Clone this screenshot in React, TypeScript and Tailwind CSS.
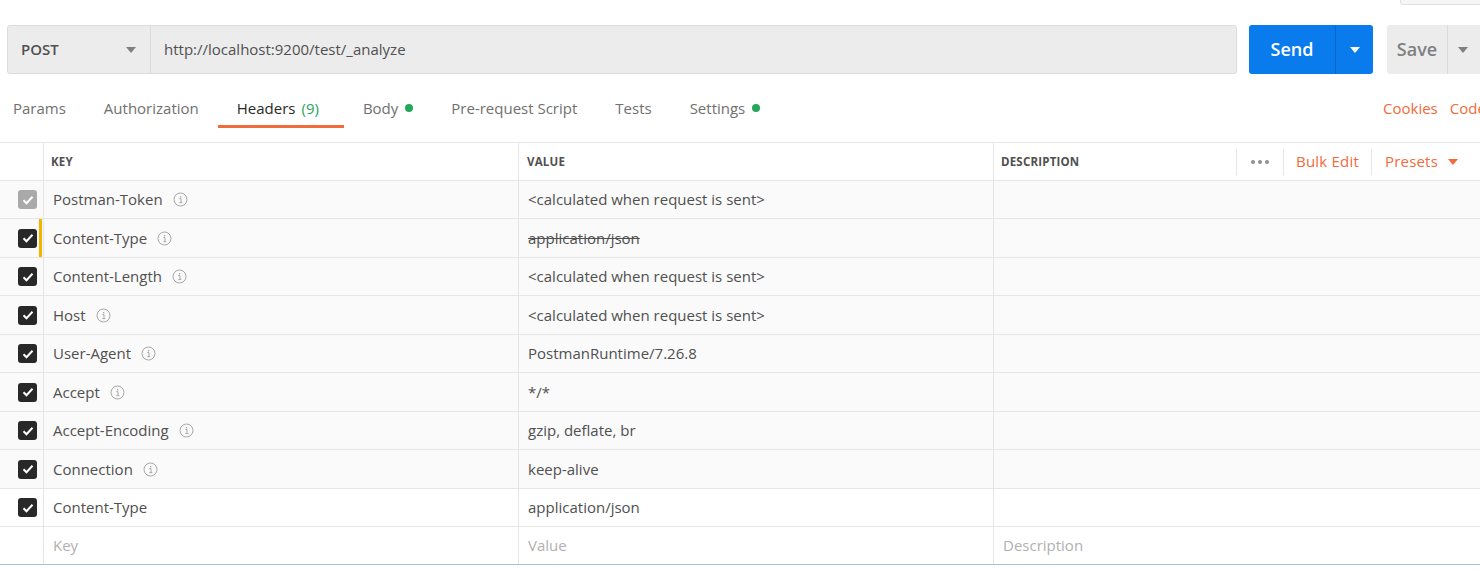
import React from "react";

type Row = {
  k: string;
  v: string;
  info?: boolean;
  locked?: boolean;
  struck?: boolean;
  marked?: boolean;
  white?: boolean;
};

const rows: Row[] = [
  { k: "Postman-Token", v: "<calculated when request is sent>", info: true, locked: true },
  { k: "Content-Type", v: "application/json", info: true, struck: true, marked: true },
  { k: "Content-Length", v: "<calculated when request is sent>", info: true },
  { k: "Host", v: "<calculated when request is sent>", info: true },
  { k: "User-Agent", v: "PostmanRuntime/7.26.8", info: true },
  { k: "Accept", v: "*/*", info: true },
  { k: "Accept-Encoding", v: "gzip, deflate, br", info: true },
  { k: "Connection", v: "keep-alive", info: true },
  { k: "Content-Type", v: "application/json", white: true },
];

const heights = [38, 39, 38, 39, 38, 39, 38, 39, 38];

const Caret = ({ color }: { color: string }) => (
  <svg width="10" height="6" viewBox="0 0 10 6">
    <path d="M0 0h10L5 6z" fill={color} />
  </svg>
);

const Info = () => (
  <svg width="15" height="15" viewBox="0 0 15 15" className="ml-[10px]">
    <circle cx="7.5" cy="7.5" r="6.5" fill="none" stroke="#a8a8a8" strokeWidth="1" />
    <rect x="7" y="4" width="1.3" height="1.3" fill="#a8a8a8" />
    <path d="M6.3 6.6h1.7v3.8M6.3 10.6h3" fill="none" stroke="#a8a8a8" strokeWidth="1" />
  </svg>
);

const Check = ({ locked }: { locked?: boolean }) => (
  <div
    className={`w-[19px] h-[19px] rounded-[3px] flex items-center justify-center ${
      locked ? "bg-[#a9a9a9]" : "bg-[#282828]"
    }`}
  >
    <svg width="12" height="10" viewBox="0 0 12 10">
      <path d="M1.5 5.2l3 3L10.5 1.8" fill="none" stroke="#fff" strokeWidth="2" />
    </svg>
  </div>
);

const Tab = ({ label, active, dot, count }: { label: string; active?: boolean; dot?: boolean; count?: string }) => (
  <div
    className={`h-full flex items-center pl-[19px] ${
      active ? "border-b-[3px] border-[#f26b3a] pt-[3px] pr-[25px] text-[#282828]" : "pr-[19px] text-[#707070]"
    }`}
  >
    {label}
    {count && <span className="ml-[6px] text-[#26a65b]">{count}</span>}
    {dot && <span className="ml-[7px] w-[8px] h-[8px] rounded-full bg-[#26a65b]" />}
  </div>
);

export default function App() {
  return (
    <div
      className="w-[1480px] h-[570px] bg-white overflow-hidden relative text-[15px]"
      style={{ fontFamily: '"Open Sans", "Noto Sans", sans-serif' }}
    >
      {/* faint box at top right */}
      <div className="absolute left-[1400px] top-[-10px] w-[100px] h-[15px] border border-[#e0e0e0] rounded-[3px] bg-[#f6f6f6]" />

      {/* request bar */}
      <div className="flex items-center pt-[25px] pl-[7px] h-[74px]">
        <div className="shrink-0 flex w-[1230px] h-[49px] bg-[#ececec] border border-[#dcdcdc] rounded-[3px]">
          <div className="w-[143px] flex items-center justify-between pl-[13px] pr-[14px] border-r border-[#dcdcdc] text-[#505050] font-semibold">
            POST
            <Caret color="#808080" />
          </div>
          <div className="flex items-center pl-[13px] text-[#505050]">http://localhost:9200/test/_analyze</div>
        </div>
        <div className="shrink-0 ml-[12px] flex w-[124px] h-[49px] rounded-[3px] bg-[#097bed] text-white">
          <div className="w-[87px] flex items-center justify-center text-[18px] font-semibold border-r border-[#0868c9]">
            Send
          </div>
          <div className="flex-1 flex items-center justify-center">
            <Caret color="#fff" />
          </div>
        </div>
        <div className="ml-[14px] flex w-[120px] h-[49px] rounded-[3px] bg-[#ececec] text-[#808080] shrink-0">
          <div className="w-[61px] flex items-center justify-center text-[18px] font-semibold border-r border-[#dcdcdc]">
            Save
          </div>
          <div className="w-[30px] flex items-center justify-center">
            <Caret color="#808080" />
          </div>
        </div>
      </div>

      {/* tabs */}
      <div className="flex items-stretch h-[40px] mt-[14px]">
        <div className="flex items-stretch -ml-[6px]">
          <Tab label="Params" />
          <Tab label="Authorization" />
          <Tab label="Headers" count="(9)" active />
          <Tab label="Body" dot />
          <Tab label="Pre-request Script" />
          <Tab label="Tests" />
          <Tab label="Settings" dot />
        </div>
        <div className="ml-auto flex items-center gap-[12px] text-[#f26b3a] mr-[-30px] w-[127px] shrink-0 whitespace-nowrap">
          <span>Cookies</span>
          <span>Code</span>
        </div>
      </div>

      {/* table */}
      <div className="border-t border-[#e6e6e6] mt-[14px]">
        <div className="flex h-[38px] border-b border-[#e6e6e6] text-[11.5px] font-bold text-[#505050] tracking-[0.2px]">
          <div className="w-[44px] border-r border-[#e6e6e6]" />
          <div className="w-[475px] border-r border-[#e6e6e6] flex items-center pl-[7px]">KEY</div>
          <div className="w-[475px] border-r border-[#e6e6e6] flex items-center pl-[8px]">VALUE</div>
          <div className="flex-1 flex items-center pl-[7px]">
            <span>DESCRIPTION</span>
            <div className="ml-auto flex items-center h-full font-normal text-[15px] text-[#f26b3a]">
              <div className="h-[26px] border-l border-[#e6e6e6] px-[14px] flex items-center gap-[3px]">
                <span className="w-[4px] h-[4px] rounded-full bg-[#909090]" />
                <span className="w-[4px] h-[4px] rounded-full bg-[#909090]" />
                <span className="w-[4px] h-[4px] rounded-full bg-[#909090]" />
              </div>
              <div className="h-[26px] border-l border-[#e6e6e6] px-[12px] flex items-center">Bulk Edit</div>
              <div className="h-[26px] border-l border-[#e6e6e6] pl-[13px] pr-[22px] flex items-center gap-[10px]">
                Presets
                <Caret color="#f26b3a" />
              </div>
            </div>
          </div>
        </div>

        {rows.map((r, i) => (
          <div
            key={i}
            className={`flex border-b border-[#e6e6e6] ${r.white ? "bg-white" : "bg-[#fafafa]"}`}
            style={{ height: heights[i] }}
          >
            <div className="w-[44px] border-r border-[#e6e6e6] flex items-center pl-[18px] relative">
              <Check locked={r.locked} />
              {r.marked && <div className="absolute right-[1px] top-0 bottom-0 w-[3px] bg-[#f5b300]" />}
            </div>
            <div className="w-[475px] border-r border-[#e6e6e6] flex items-center pl-[9px] text-[#505050]">
              {r.k}
              {r.info && <Info />}
            </div>
            <div
              className={`w-[475px] border-r border-[#e6e6e6] flex items-center pl-[9px] text-[#505050] ${
                r.struck ? "line-through" : ""
              }`}
            >
              {r.v}
            </div>
            <div className="flex-1" />
          </div>
        ))}

        <div className="flex h-[38px] border-b border-[#a7c1dc] text-[#b0b0b0]">
          <div className="w-[44px] border-r border-[#e6e6e6]" />
          <div className="w-[475px] border-r border-[#e6e6e6] flex items-center pl-[9px]">Key</div>
          <div className="w-[475px] border-r border-[#e6e6e6] flex items-center pl-[9px]">Value</div>
          <div className="flex-1 flex items-center pl-[9px]">Description</div>
        </div>
      </div>
    </div>
  );
}
